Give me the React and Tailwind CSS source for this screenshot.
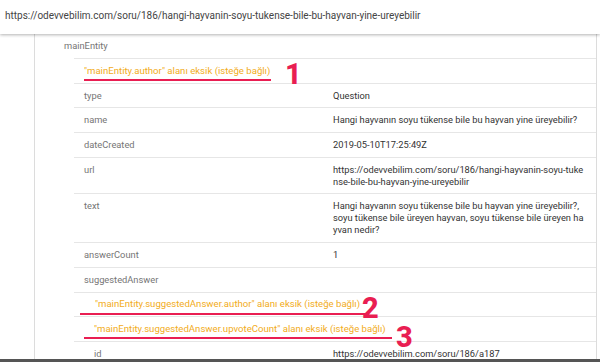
const url = "https://odevvebilim.com/soru/186/hangi-hayvanin-soyu-tukense-bile-bu-hayvan-yine-ureyebilir";

const Row = ({ label, value, indent = false }) => (
  <div className="flex border-b border-[#e6e6e6] py-[5.85px] text-[9.3px] leading-[12px]">
    <div className={`${indent ? "pl-[20px]" : "pl-[10px]"} w-[259px] shrink-0 text-[#757575]`}>{label}</div>
    <div className="w-[253px] break-all text-[#333]">{value}</div>
  </div>
);

const Warning = ({ text, indent, lineLeft, lineWidth, num, numLeft, numTop }) => (
  <div className="relative border-b border-[#e6e6e6] py-[5.85px] text-[9.6px] leading-[12px]">
    <span className="text-[#f2ac1b]" style={{ paddingLeft: indent }}>
      {text}
    </span>
    <div className="absolute h-[2px] bg-[#e91e52]" style={{ left: lineLeft, width: lineWidth, top: 20 }} />
    <span
      className="absolute text-[29px] font-extrabold leading-none text-[#e91e52]"
      style={{ left: numLeft, top: numTop }}
    >
      {num}
    </span>
  </div>
);

export default function App() {
  return (
    <div
      className="flex h-[362px] w-[600px] flex-col overflow-hidden bg-white text-[10px]"
      style={{ fontFamily: "Roboto, 'Noto Sans', sans-serif" }}
    >
      <div className="relative z-10 h-[34px] shrink-0 bg-white pl-[5px] pt-[10px] leading-[12px] text-[#444] shadow-[0_1px_3px_rgba(0,0,0,0.3)]">
        {url}
      </div>
      <div className="flex min-h-0 flex-1 pl-[34px] pr-[3px]">
        <div className="flex-1 border-x border-[#dcdcdc] pt-[6px]">
          <div className="pb-[6px] pl-[29px] text-[9.3px] leading-[12px] text-[#757575]">mainEntity</div>
          <div className="ml-[39px] border-t border-[#e6e6e6]">
            <Warning
              text={'"mainEntity.author" alanı eksik (isteğe bağlı)'}
              indent={10}
              lineLeft={10}
              lineWidth={187}
              num="1"
              numLeft={211}
              numTop={1}
            />
            <Row label="type" value="Question" />
            <Row label="name" value="Hangi hayvanın soyu tükense bile bu hayvan yine üreyebilir?" />
            <Row label="dateCreated" value="2019-05-10T17:25:49Z" />
            <Row label="url" value={url} />
            <Row
              label="text"
              value="Hangi hayvanın soyu tükense bile bu hayvan yine üreyebilir?, soyu tükense bile üreyen hayvan, soyu tükense bile üreyen hayvan nedir?"
            />
            <Row label="answerCount" value="1" />
            <Row label="suggestedAnswer" value="" />
            <Warning
              text={'"mainEntity.suggestedAnswer.author" alanı eksik (isteğe bağlı)'}
              indent={21}
              lineLeft={6}
              lineWidth={286}
              num="2"
              numLeft={288}
              numTop={1}
            />
            <Warning
              text={'"mainEntity.suggestedAnswer.upvoteCount" alanı eksik (isteğe bağlı)'}
              indent={20}
              lineLeft={10}
              lineWidth={308}
              num="3"
              numLeft={322}
              numTop={6}
            />
            <Row label="id" value="https://odevvebilim.com/soru/186/a187" indent />
          </div>
        </div>
      </div>
      <div className="h-[3px] shrink-0 bg-[#555]" />
    </div>
  );
}
